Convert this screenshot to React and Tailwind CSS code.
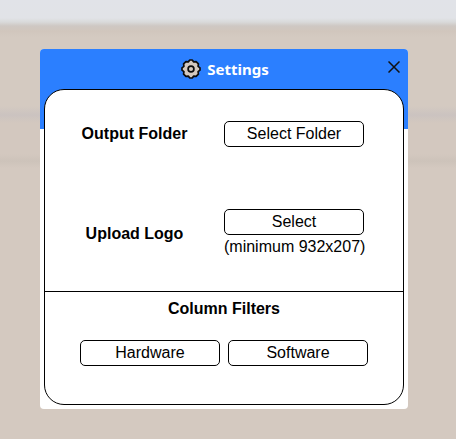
function GearIcon() {
  return (
    <svg viewBox="0 0 20 20" className="size-5" fill="#d4c9bf" stroke="#0c0c0c" strokeWidth="1.7" strokeLinejoin="round">
      <path d="M8.800 1h2.400L12.700 2.900 15.100 2.600 17.400 4.900 17.100 7.300 19 8.800v2.400L17.100 12.700 17.400 15.100 15.100 17.400 12.700 17.100 11.200 19H8.800L7.300 17.100 4.900 17.400 2.600 15.100 2.900 12.700 1 11.200V8.800L2.900 7.300 2.600 4.900 4.900 2.600 7.300 2.900z" />
      <circle cx="10" cy="10" r="2.900" />
    </svg>
  );
}

function OutlineButton({ children }) {
  return (
    <button className="flex h-[26px] w-[140px] items-center justify-center rounded-[5px] border border-black bg-white leading-6">
      {children}
    </button>
  );
}

export default function App() {
  return (
    <div className="h-[439px] w-[456px] overflow-hidden bg-[linear-gradient(180deg,#e1e3e8_0px,#e1e3e7_18px,#d9dada_22px,#cec8c3_26px,#d1c6bd_31px,#d4cac1_37px,#d4cac1_106px,#cbc3c0_115px,#d3c8bf_123px,#d3c8bf_154px,#cdc3ba_161px,#d4c9c0_168px)] pt-[49px] pl-10 font-['Liberation_Sans',Arial,sans-serif] text-base text-black">
      <main className="h-[360px] w-[368px] overflow-hidden rounded bg-white">
        <header className="grid h-20 grid-cols-[1fr_auto_1fr] items-start bg-[#2b7fff]">
          <div />
          <div className="flex h-10 items-center gap-1.5 pl-0.5">
            <GearIcon />
            <h1 className="pt-px font-['Noto_Sans',sans-serif] text-[15px] font-bold text-white">Settings</h1>
          </div>
          <button aria-label="Close" className="mt-3 mr-2 justify-self-end">
            <svg viewBox="0 0 12 12" className="size-3" stroke="#111" strokeWidth="1.5">
              <path d="M.5.5l11 11M11.500.5l-11 11" />
            </svg>
          </button>
        </header>
        <section className="mx-1 -mt-10 h-[316px] overflow-hidden rounded-[20px] border border-black bg-white">
          <div className="grid h-[202px] grid-cols-[179px_1fr] grid-rows-[100px_101px] border-b border-black">
            <h2 className="pt-8 text-center font-bold">Output Folder</h2>
            <div className="pt-[31px]">
              <OutlineButton>Select Folder</OutlineButton>
            </div>
            <h2 className="pt-8 text-center font-bold">Upload Logo</h2>
            <div className="pt-[19px]">
              <OutlineButton>Select</OutlineButton>
              <p className="leading-6">(minimum 932x207)</p>
            </div>
          </div>
          <h2 className="pt-[5px] text-center font-bold">Column Filters</h2>
          <div className="flex justify-center gap-2 pt-[19px]">
            <OutlineButton>Hardware</OutlineButton>
            <OutlineButton>Software</OutlineButton>
          </div>
        </section>
      </main>
    </div>
  );
}
